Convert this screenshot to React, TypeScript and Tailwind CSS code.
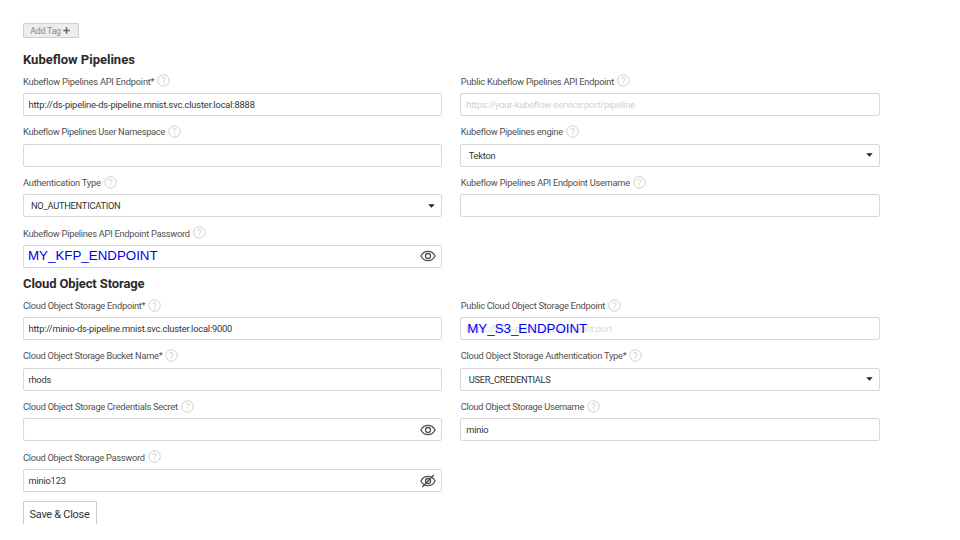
import type { ReactNode } from 'react';

function Help() {
  return (
    <svg className="h-[13px] w-[13px] shrink-0" viewBox="0 0 13 13" fill="none" stroke="#cdcdcd">
      <circle cx="6.5" cy="6.5" r="5.7" strokeWidth="1" />
      <path d="M4.9 5c0-1 .7-1.6 1.65-1.6S8.2 4 8.2 4.9c0 1.2-1.65 1.3-1.65 2.6" strokeWidth="1" />
      <path d="M6.55 8.6v1.1" strokeWidth="1.1" />
    </svg>
  );
}

function Eye({ off = false }: { off?: boolean }) {
  return (
    <svg className="h-4 w-4 shrink-0" viewBox="0 0 16 16" fill="none" stroke="#505050" strokeWidth="1.3">
      <path d="M1 8C2.4 5 5 3.3 8 3.3S13.6 5 15 8c-1.4 3-4 4.7-7 4.7S2.4 11 1 8Z" />
      <circle cx="8" cy="8" r="2.5" />
      {off && <path d="M2.3 14 13.7 2" />}
    </svg>
  );
}

function Caret() {
  return (
    <svg className="mr-[1px] h-1 w-[7px] shrink-0" viewBox="0 0 7 4" fill="#222">
      <path d="M.3.3h6.4L3.5 3.8Z" />
    </svg>
  );
}

function Field({ label, track, icon, inset, children }: { label: string; track: string; icon?: ReactNode; inset?: boolean; children?: ReactNode }) {
  return (
    <div className="h-[50.67px]">
      <div className="flex h-[13px] items-center gap-[3px] pl-[0.5px] text-[9.3px] text-[#505050]">
        <span className={`whitespace-nowrap pt-[1.5px] ${track}`}>{label}</span>
        <Help />
      </div>
      <div className={`mt-[5.6px] flex h-[23px] items-center justify-between rounded-[2px] border border-[#d8d8d8] bg-white pr-[5px] text-[9.3px] text-[#333] ${inset ? 'pl-[7.5px]' : 'pl-[5px]'}`}>
        <div className="flex items-center whitespace-nowrap pt-px">{children}</div>
        {icon}
      </div>
    </div>
  );
}

export default function App() {
  return (
    <main className="h-[540px] w-[960px] overflow-hidden bg-white font-['Roboto','Noto_Sans',sans-serif]">
      <div className="h-[524px] w-[880px] overflow-hidden pl-[22.5px] pt-[23px]">
        <button className="flex h-[15px] w-[56px] items-center justify-center gap-[2px] rounded-[1px] border border-[#d0d0d0] bg-[#ededed] pr-[1px] text-[8.8px] tracking-[-0.25px] text-[#8a8a8a]">
          <span className="pt-[1.5px]">Add Tag</span>
          <svg className="h-[7px] w-[7px]" viewBox="0 0 7 7" stroke="#666" strokeWidth="1.4"><path d="M3.5 .3v6.4M.3 3.5h6.4" /></svg>
        </button>
        <h2 className="mt-[14px] flex h-4 items-center whitespace-nowrap pl-[0.5px] text-[13px] font-bold text-[#2b2b2b]"><span>Kubeflow Pipelines</span></h2>
        <section className="mt-[6.3px] grid grid-cols-2 gap-x-[18px]">
          <Field label="Kubeflow Pipelines API Endpoint*" track="tracking-[-0.22px]"><span className="tracking-[-0.155px]">http://ds-pipeline-ds-pipeline.mnist.svc.cluster.local:8888</span></Field>
          <Field label="Public Kubeflow Pipelines API Endpoint" track="tracking-[-0.24px]"><span className="tracking-[-0.165px] text-[#cfcfcf]">https://your-kubeflow-service:port/pipeline</span></Field>
          <Field label="Kubeflow Pipelines User Namespace" track="tracking-[-0.3px]" />
          <Field label="Kubeflow Pipelines engine" track="tracking-[-0.26px]" inset icon={<Caret />}><span className="tracking-[-0.25px]">Tekton</span></Field>
          <Field label="Authentication Type" track="tracking-[-0.24px]" inset icon={<Caret />}><span className="tracking-[-0.26px]">NO_AUTHENTICATION</span></Field>
          <Field label="Kubeflow Pipelines API Endpoint Username" track="tracking-[-0.245px]" />
          <Field label="Kubeflow Pipelines API Endpoint Password" track="tracking-[-0.275px]" icon={<Eye />}>
            <span className="-ml-[0.5px] -mt-[1px] font-['Liberation_Sans',sans-serif] text-[13.33px] leading-4 text-[#0000f0]">MY_KFP_ENDPOINT</span>
          </Field>
        </section>
        <h2 className="mt-[-0.8px] flex h-4 items-center whitespace-nowrap pl-[0.5px] text-[13px] font-bold tracking-[-0.11px] text-[#2b2b2b]"><span>Cloud Object Storage</span></h2>
        <section className="mt-[6.4px] grid grid-cols-2 gap-x-[18px]">
          <Field label="Cloud Object Storage Endpoint*" track="tracking-[-0.26px]"><span className="tracking-[-0.19px]">http://minio-ds-pipeline.mnist.svc.cluster.local:9000</span></Field>
          <Field label="Public Cloud Object Storage Endpoint" track="tracking-[-0.27px]">
            <div className="relative flex items-center">
              <span className="tracking-[-0.14px] text-[#dcdcdc]">https://your-public-cos-endpoint:port</span>
              <span className="absolute left-[1px] top-[-1px] font-['Liberation_Sans',sans-serif] text-[13.33px] leading-4 text-[#0000f0]">MY_S3_ENDPOINT</span>
            </div>
          </Field>
          <Field label="Cloud Object Storage Bucket Name*" track="tracking-[-0.29px]"><span className="tracking-[-0.2px]">rhods</span></Field>
          <Field label="Cloud Object Storage Authentication Type*" track="tracking-[-0.245px]" inset icon={<Caret />}><span className="tracking-[-0.3px]">USER_CREDENTIALS</span></Field>
          <Field label="Cloud Object Storage Credentials Secret" track="tracking-[-0.26px]" icon={<Eye />} />
          <Field label="Cloud Object Storage Username" track="tracking-[-0.29px]"><span className="tracking-[-0.2px]">minio</span></Field>
          <Field label="Cloud Object Storage Password" track="tracking-[-0.31px]" icon={<Eye off />}><span className="tracking-[-0.2px]">minio123</span></Field>
        </section>
        <button className="flex h-7 w-[74px] items-center justify-center whitespace-nowrap rounded-t-[1px] border border-[#ccc] bg-white text-[11px] tracking-[-0.3px] text-[#333]"><span className="pt-px">Save &amp; Close</span></button>
      </div>
    </main>
  );
}
